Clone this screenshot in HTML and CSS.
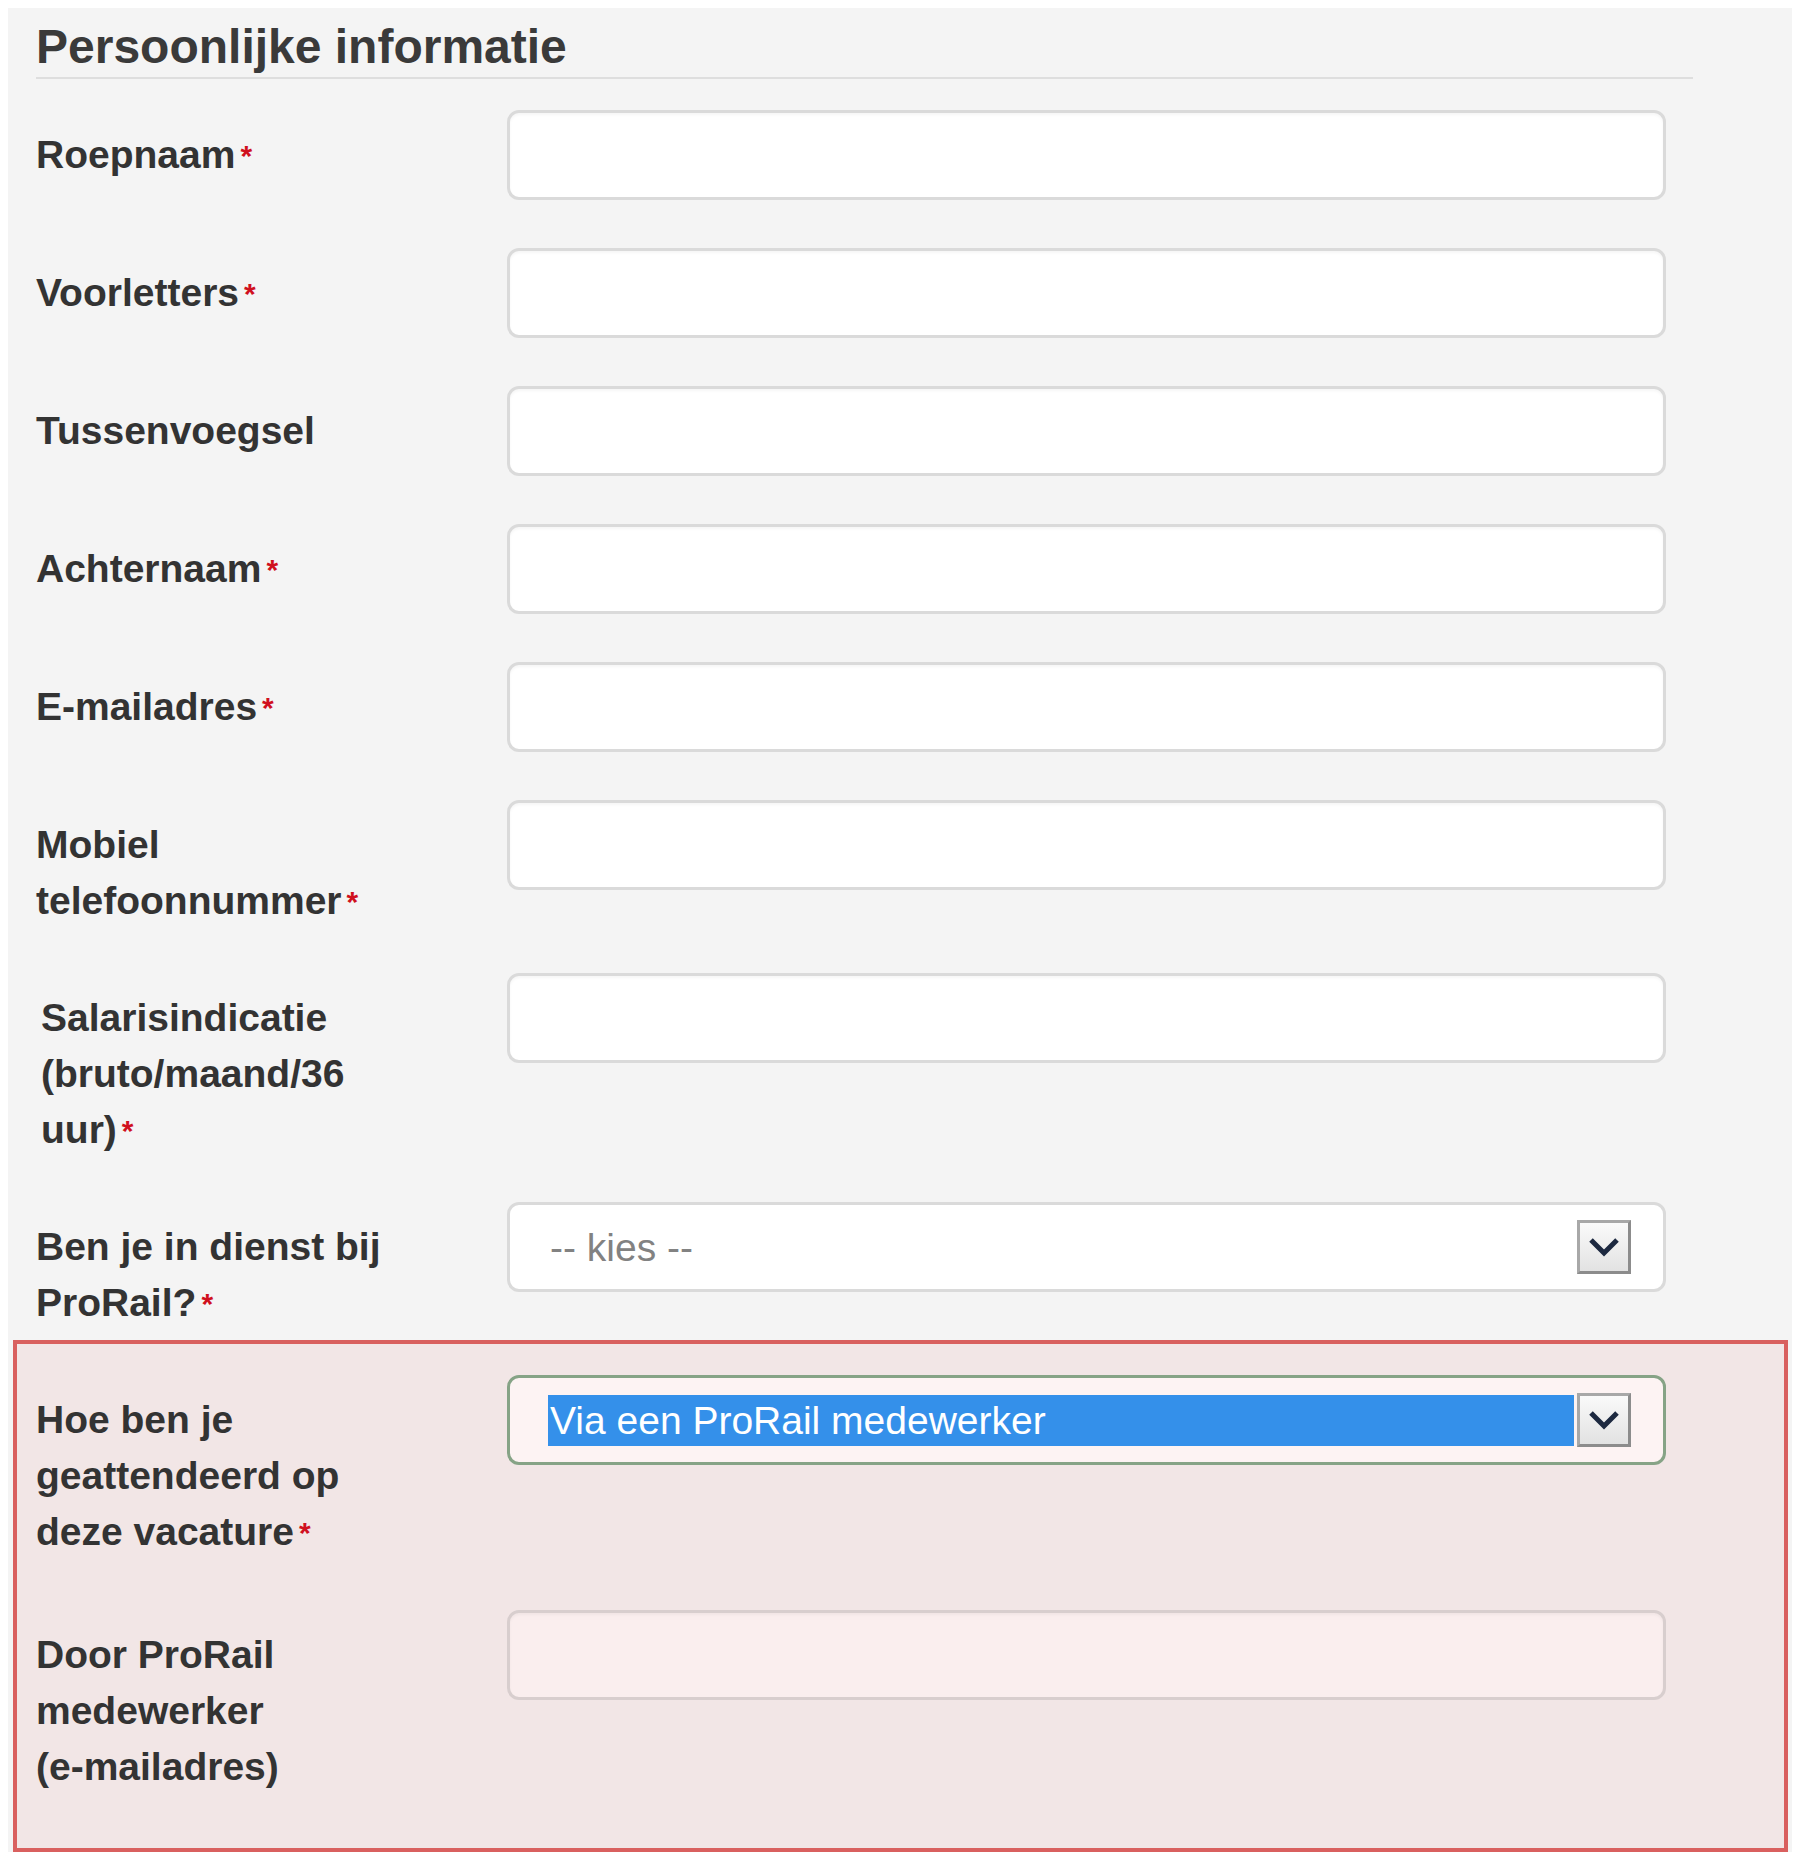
FILE: index.html
```html
<!DOCTYPE html>
<html lang="nl">
<head>
    <meta charset="UTF-8">
    <meta name="viewport" content="width=device-width, initial-scale=1.0">
    <title>Persoonlijke informatie</title>
    <link rel="stylesheet" href="styles.css">
</head>
<body>
    <div class="panel">
        <h2>Persoonlijke informatie</h2>
        <form id="applyForm">
            <!-- Roepnaam -->
            <div class="form-group">
                <label for="roepnaam">Roepnaam<span class="req">*</span></label>
                <input type="text" id="roepnaam" name="roepnaam">
            </div>

            <!-- Voorletters -->
            <div class="form-group">
                <label for="voorletters">Voorletters<span class="req">*</span></label>
                <input type="text" id="voorletters" name="voorletters">
            </div>

            <!-- Tussenvoegsel -->
            <div class="form-group">
                <label for="tussenvoegsel">Tussenvoegsel</label>
                <input type="text" id="tussenvoegsel" name="tussenvoegsel">
            </div>

            <!-- Achternaam -->
            <div class="form-group">
                <label for="achternaam">Achternaam<span class="req">*</span></label>
                <input type="text" id="achternaam" name="achternaam">
            </div>

            <!-- E-mailadres -->
            <div class="form-group">
                <label for="email">E-mailadres<span class="req">*</span></label>
                <input type="text" id="email" name="email">
            </div>

            <!-- Mobiel -->
            <div class="form-group">
                <label for="mobiel">Mobiel telefoonnummer<span class="req">*</span></label>
                <input type="text" id="mobiel" name="mobiel">
            </div>

            <!-- Salaris -->
            <div class="form-group">
                <label for="salaris" class="indent">Salarisindicatie (bruto/maand/36 uur)<span class="req">*</span></label>
                <input type="text" id="salaris" name="salaris">
            </div>

            <!-- In dienst -->
            <div class="form-group">
                <label>Ben je in dienst bij ProRail?<span class="req">*</span></label>
                <div class="select">
                    <span class="select-value placeholder">-- kies --</span>
                    <span class="select-arrow">
                        <svg width="34" height="24" viewBox="0 0 34 24"><path d="M4 5 L17 18 L30 5" fill="none" stroke="#1d2940" stroke-width="5"/></svg>
                    </span>
                </div>
            </div>

            <!-- Highlighted group -->
            <div class="highlight">
                <div class="form-group">
                    <label>Hoe ben je geattendeerd op deze vacature<span class="req">*</span></label>
                    <div class="select focused">
                        <span class="select-value selected">Via een ProRail medewerker</span>
                        <span class="select-arrow">
                            <svg width="34" height="24" viewBox="0 0 34 24"><path d="M4 5 L17 18 L30 5" fill="none" stroke="#1d2940" stroke-width="5"/></svg>
                        </span>
                    </div>
                </div>

                <div class="form-group">
                    <label for="collega">Door ProRail medewerker <span class="nowrap">(e-mailadres)</span></label>
                    <input type="text" id="collega" name="collega">
                </div>
            </div>
        </form>
    </div>
</body>
</html>
```

FILE: styles.css
```css
/* Page */
body {
    font-family: 'Liberation Sans', Arial, sans-serif;
    background-color: #fff;
    margin: 0;
    padding: 0;
    color: #333;
}

.panel {
    background: #f4f4f4;
    margin: 8px 8px 0 8px;
    padding: 11px 99px 0 28px;
}

h2 {
    font-size: 48px;
    line-height: 56px;
    font-weight: bold;
    color: #3a3a3a;
    margin: 0 0 31px 0;
    padding-bottom: 2px;
    border-bottom: 2px solid #dedede;
}

/* Rows: label left, field right */
.form-group {
    display: grid;
    grid-template-columns: 390px 1159px;
    column-gap: 81px;
    align-items: start;
    margin-bottom: 48px;
}

label {
    font-size: 39px;
    line-height: 56px;
    font-weight: bold;
    color: #333;
    padding-top: 17px;
    margin-bottom: -4px;
}

label.indent {
    padding-left: 5px;
}

.nowrap {
    white-space: nowrap;
}

.req {
    color: #d0101e;
    font-size: 30px;
    line-height: 1;
    margin-left: 5px;
    vertical-align: 2px;
}

input[type="text"] {
    height: 90px;
    box-sizing: border-box;
    border: 3px solid #dadada;
    border-radius: 12px;
    background: #fff;
    box-shadow: inset 0 2px 3px rgba(0, 0, 0, 0.04);
    font-family: 'Liberation Sans', Arial, sans-serif;
    font-size: 39px;
    padding: 0 38px;
    margin: 0;
    outline: none;
}

/* Dropdowns */
.select {
    height: 90px;
    box-sizing: border-box;
    border: 3px solid #dadada;
    border-radius: 12px;
    background: #fff;
    display: flex;
    align-items: center;
    padding: 0 32px 0 38px;
    font-size: 39px;
}

.select-value {
    flex: 1;
    height: 51px;
    line-height: 51px;
    padding-left: 2px;
}

.placeholder {
    color: #828282;
}

.select.focused {
    border-color: #86a386;
    background: #fdf3f3;
}

.selected {
    background: #3490ea;
    color: #fff;
    margin-right: 3px;
}

.select-arrow {
    width: 54px;
    height: 54px;
    box-sizing: border-box;
    border: 3px solid #8c8c8c;
    border-top-color: #a8a8a8;
    border-left-color: #a8a8a8;
    background: linear-gradient(#fafafa, #e2e2e2);
    display: flex;
    align-items: center;
    justify-content: center;
}

/* Highlighted conditional block */
.highlight {
    background: #f2e6e6;
    border: 4px solid #d9605f;
    margin: -35px -95px 0 -23px;
    padding: 31px 91px 53px 19px;
}

.highlight label {
    margin-bottom: 0;
}

.highlight .form-group {
    margin-bottom: 50px;
}

.highlight .form-group:last-child {
    margin-bottom: 0;
}

.highlight input[type="text"] {
    background: #faeeee;
    border-color: #d8cece;
}
```
